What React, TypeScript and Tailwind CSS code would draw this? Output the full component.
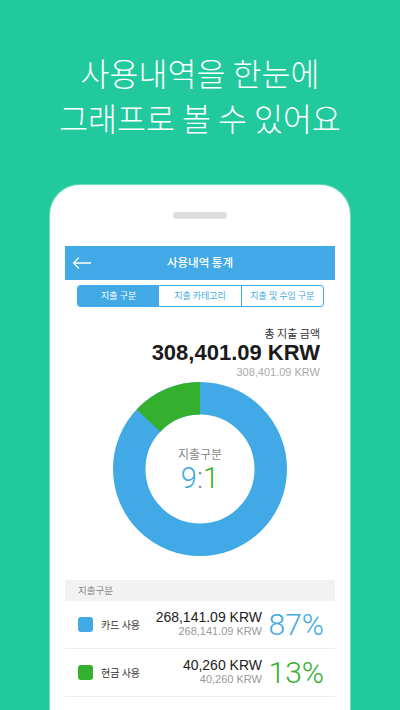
import React from "react";

const KR = "font-['Noto_Sans_CJK_KR','Noto_Sans',sans-serif]";
const NUM = "font-['Liberation_Sans',Arial,sans-serif]";
const THIN = "font-['Roboto','Liberation_Sans',sans-serif]";

function Donut() {
  return (
    <svg width="174" height="174" viewBox="0 0 174 174">
      <circle cx="87" cy="87" r="70.75" fill="none" stroke="#41aae6" strokeWidth="32.5" />
      <path
        d="M87 0 A87 87 0 0 0 23.6 27.45 L47.27 49.7 A54.5 54.5 0 0 1 87 32.5 Z"
        fill="#34b02e"
      />
    </svg>
  );
}

function Row({
  swatch,
  pctClass,
  label,
  amount,
  pct,
}: {
  swatch: string;
  pctClass: string;
  label: string;
  amount: string;
  pct: string;
}) {
  return (
    <div className="flex items-center h-[48px] border-b border-[#eeeeee] pl-[13px] pr-[11px]">
      <div className={`w-[15px] h-[15px] rounded-[3px] ${swatch}`} />
      <div className={`ml-[8px] text-[10px] text-[#333] leading-none ${KR}`}>{label}</div>
      <div className={`flex-1 flex flex-col items-end pb-[2px] ${NUM}`}>
        <div className="text-[14px] leading-[16px] text-[#222]">{amount}</div>
        <div className="text-[11px] leading-[13px] text-[#999]">{amount}</div>
      </div>
      <div className={`w-[62px] text-right text-[30px] leading-none font-light ${THIN} ${pctClass}`}>
        {pct}
      </div>
    </div>
  );
}

export default function App() {
  return (
    <div className="w-[400px] h-[710px] bg-[#21c99c] overflow-hidden flex flex-col items-center">
      <div className={`pt-[50px] text-white text-[31.5px] leading-[45px] font-light text-center ${KR}`}>
        <div>사용내역을 한눈에</div>
        <div>그래프로 볼 수 있어요</div>
      </div>

      <div className="mt-[45px] w-[300px] flex-1 bg-white rounded-t-[30px] shadow-[0_0_0_1px_rgba(255,255,255,0.35)] flex flex-col px-[15px]">
        <div className="pt-[27px] flex justify-center">
          <div className="w-[54px] h-[7px] rounded-full bg-[#dedede]" />
        </div>

        <div className="mt-[27px] h-[34px] flex items-center relative bg-[#41aae6]">
          <svg className="absolute left-[7px] top-[11px]" width="19" height="12" viewBox="0 0 19 12">
            <path
              d="M1.5 6 H18.5 M1.5 6 L6.5 1 M1.5 6 L6.5 11"
              stroke="white"
              strokeWidth="1.3"
              fill="none"
              strokeLinecap="round"
            />
          </svg>
          <div className={`w-full text-center text-white text-[11.5px] font-medium ${KR}`}>
            사용내역 통계
          </div>
        </div>

        <div className="mt-[5px] ml-[12px] mr-[11px] h-[22px] flex rounded-[3px] overflow-hidden border border-[#41aae6]">
          <div className={`flex-1 flex items-center justify-center text-white text-[9px] bg-[#41aae6] ${KR}`}>
            지출 구분
          </div>
          <div className={`flex-1 flex items-center justify-center text-[9px] text-[#41aae6] ${KR}`}>
            지출 카테고리
          </div>
          <div
            className={`flex-1 flex items-center justify-center text-[9px] text-[#41aae6] border-l border-[#41aae6] ${KR}`}
          >
            지출 및 수입 구분
          </div>
        </div>

        <div className="mt-[19px] pr-[15px] flex flex-col items-end">
          <div className={`text-[11px] leading-[14px] text-[#333] ${KR}`}>총 지출 금액</div>
          <div className={`text-[22px] leading-[26px] font-bold text-[#1a1a1a] ${NUM}`}>
            308,401.09 KRW
          </div>
          <div className={`text-[11px] leading-[12px] text-[#aaa] ${NUM}`}>308,401.09 KRW</div>
        </div>

        <div className="mt-[4px] flex justify-center relative">
          <Donut />
          <div className="absolute inset-0 flex flex-col items-center justify-center pt-[2px]">
            <div className={`text-[12px] leading-[16px] text-[#8a8a8a] ${KR}`}>지출구분</div>
            <div className={`text-[29px] leading-[32px] font-light ${THIN}`}>
              <span className="text-[#41aae6]">9</span>
              <span className="text-[#888]">:</span>
              <span className="text-[#34b02e]">1</span>
            </div>
          </div>
        </div>

        <div
          className={`mt-[24px] h-[21px] bg-[#f2f2f2] flex items-center pl-[13px] text-[9.5px] text-[#888] ${KR}`}
        >
          지출구분
        </div>
        <Row swatch="bg-[#41aae6]" pctClass="text-[#41aae6]" label="카드 사용" amount="268,141.09 KRW" pct="87%" />
        <Row swatch="bg-[#34b02e]" pctClass="text-[#34b02e]" label="현금 사용" amount="40,260 KRW" pct="13%" />
      </div>
    </div>
  );
}
